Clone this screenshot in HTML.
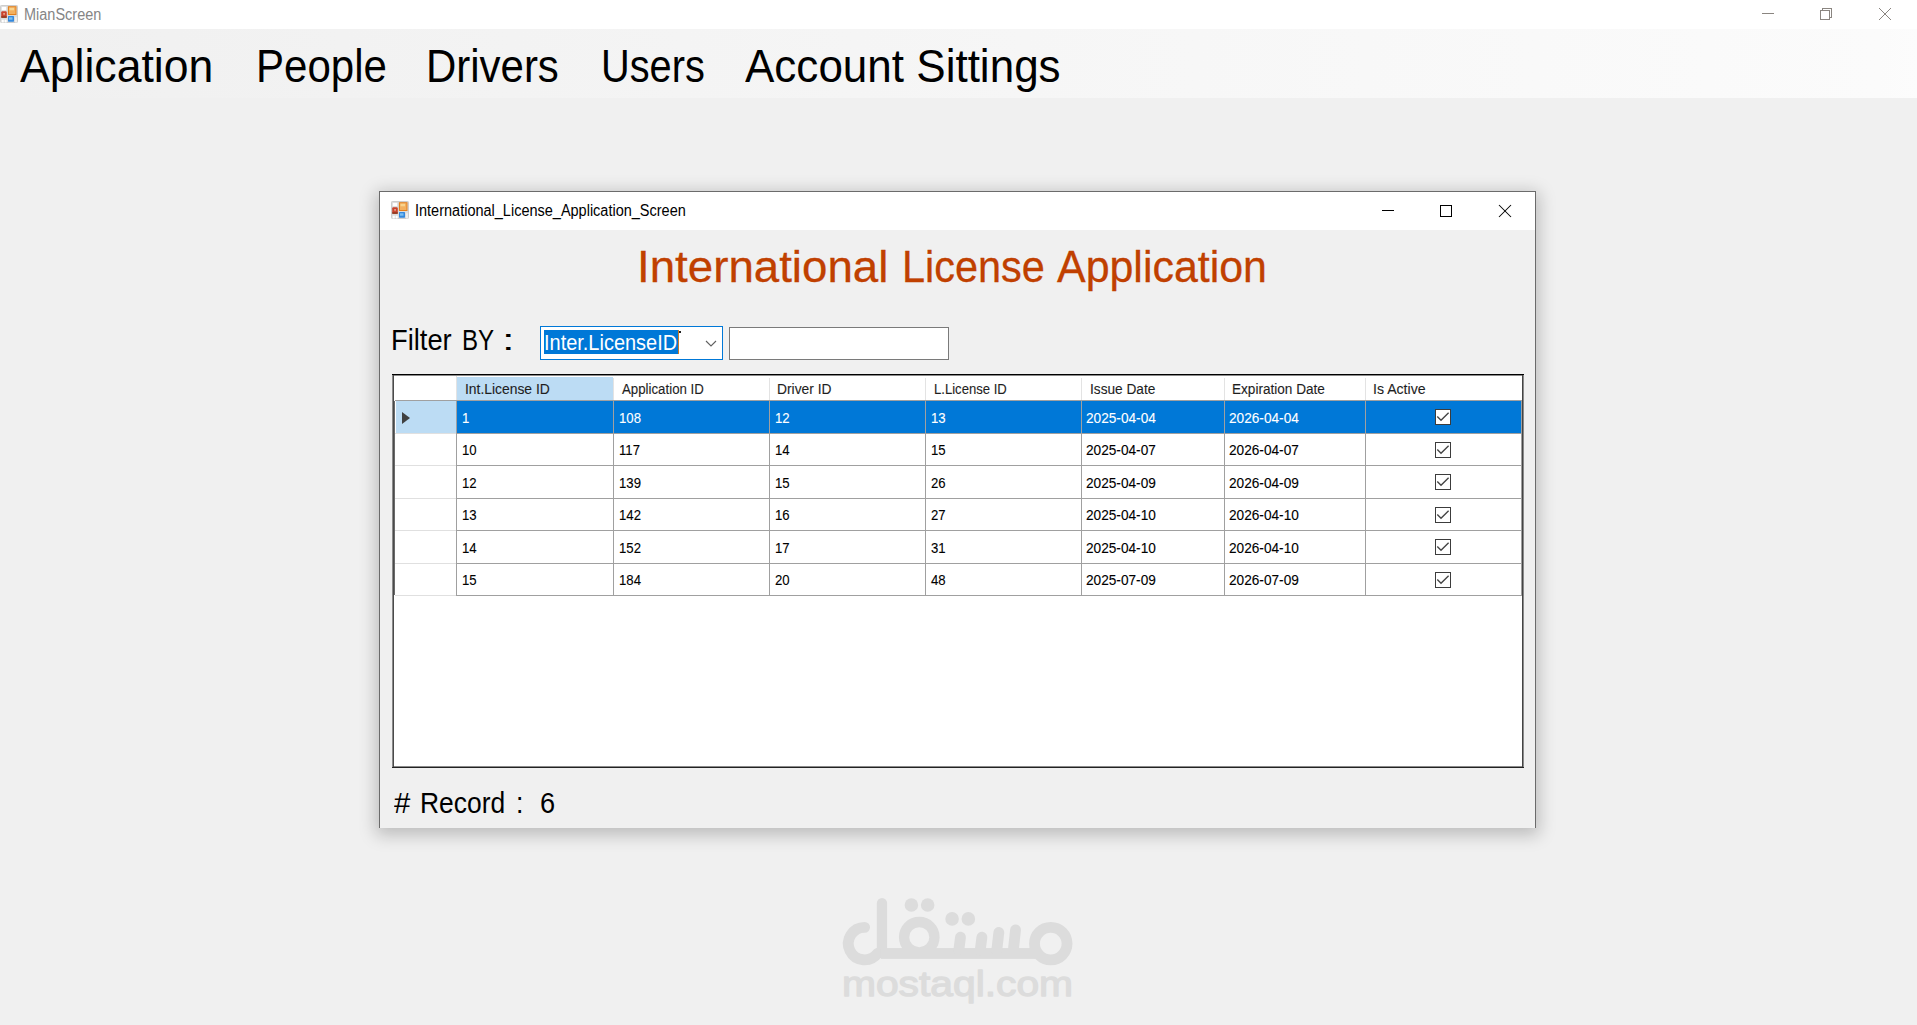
<!DOCTYPE html><html><head><meta charset="utf-8"><style>
*{margin:0;padding:0;box-sizing:border-box}
html,body{width:1917px;height:1025px;overflow:hidden;background:#f0f0f0;font-family:"Liberation Sans",sans-serif}
.a{position:absolute}
.t{position:absolute;white-space:nowrap;line-height:1;transform-origin:0 0}
</style></head><body><div class="a" style="left:0;top:0;width:1917px;height:29px;background:#fff"></div>
<div class="a" style="left:0;top:29px;width:1917px;height:69px;background:linear-gradient(to right,#f0f0f0,#fbfbfb 98%,#fcfcfc)"></div>
<svg class="a" style="left:0px;top:5px" width="18" height="18" viewBox="0 0 18 18">
<rect x="0.5" y="0.5" width="17" height="17" rx="0.8" fill="#dcdcdc" stroke="#cdcdcd"/>
<rect x="1.8" y="1.9" width="4.4" height="3.2" fill="#fff"/>
<rect x="1.2" y="6.2" width="5.6" height="6.6" rx="1.2" fill="#c9422c"/>
<path d="M3.2,8.2 L5,8.2 L4,10.5 Z" fill="#f2d9c0"/>
<rect x="1.2" y="11.3" width="5.6" height="1.5" fill="#8a3a20"/>
<rect x="7.9" y="1.2" width="8.6" height="8.8" fill="#e2801e"/>
<rect x="9" y="2.2" width="6.5" height="6.8" fill="#f3b05f"/>
<rect x="9.5" y="2.8" width="4.5" height="2.5" fill="#f8d48e"/>
<rect x="8" y="11" width="6" height="5.7" rx="0.6" fill="#3388dd"/>
<rect x="9" y="12.3" width="3.5" height="2.4" fill="#7cc0f2"/>
<rect x="1.75" y="14.7" width="2" height="2.8" fill="#fff"/><rect x="4.65" y="14.7" width="2" height="2.8" fill="#fff"/>
<rect x="15.2" y="12.3" width="1.5" height="5.2" fill="#f4f4f4"/>
</svg>
<svg class="a" style="left:1750px;top:0" width="167" height="29" viewBox="0 0 167 29">
<g stroke="#8a8580" stroke-width="1" fill="none" shape-rendering="crispEdges">
<line x1="12" y1="13.5" x2="24" y2="13.5"/>
<rect x="70.5" y="10.5" width="9" height="9"/>
<polyline points="72.5,10.5 72.5,8.5 81.5,8.5 81.5,17.5 79.5,17.5"/>
</g>
<g stroke="#8a8580" stroke-width="1" fill="none">
<line x1="129" y1="8" x2="141" y2="20"/><line x1="141" y1="8" x2="129" y2="20"/>
</g></svg>
<div class="a" style="left:379px;top:191px;width:1157px;height:637px;box-shadow:0 4px 16px 3px rgba(0,0,0,0.22);background:#f0f0f0;border:1px solid #6b6b6b;border-bottom:none"></div>
<div class="a" style="left:380px;top:192px;width:1155px;height:38px;background:#fff"></div>
<svg class="a" style="left:391px;top:201px" width="18" height="18" viewBox="0 0 18 18">
<rect x="0.5" y="0.5" width="17" height="17" rx="0.8" fill="#dcdcdc" stroke="#cdcdcd"/>
<rect x="1.8" y="1.9" width="4.4" height="3.2" fill="#fff"/>
<rect x="1.2" y="6.2" width="5.6" height="6.6" rx="1.2" fill="#c9422c"/>
<path d="M3.2,8.2 L5,8.2 L4,10.5 Z" fill="#f2d9c0"/>
<rect x="1.2" y="11.3" width="5.6" height="1.5" fill="#8a3a20"/>
<rect x="7.9" y="1.2" width="8.6" height="8.8" fill="#e2801e"/>
<rect x="9" y="2.2" width="6.5" height="6.8" fill="#f3b05f"/>
<rect x="9.5" y="2.8" width="4.5" height="2.5" fill="#f8d48e"/>
<rect x="8" y="11" width="6" height="5.7" rx="0.6" fill="#3388dd"/>
<rect x="9" y="12.3" width="3.5" height="2.4" fill="#7cc0f2"/>
<rect x="1.75" y="14.7" width="2" height="2.8" fill="#fff"/><rect x="4.65" y="14.7" width="2" height="2.8" fill="#fff"/>
<rect x="15.2" y="12.3" width="1.5" height="5.2" fill="#f4f4f4"/>
</svg>
<svg class="a" style="left:1360px;top:195px" width="175" height="35" viewBox="0 0 175 35">
<g stroke="#000" stroke-width="1" fill="none" shape-rendering="crispEdges">
<line x1="22" y1="15.5" x2="34" y2="15.5"/>
<rect x="80.5" y="10.5" width="11" height="11"/>
</g>
<g stroke="#000" stroke-width="1.05" fill="none">
<line x1="139" y1="10" x2="151" y2="22"/><line x1="151" y1="10" x2="139" y2="22"/>
</g></svg>
<div class="a" style="left:540px;top:326px;width:183px;height:34px;background:#fff;border:1px solid #0078d7"></div>
<div class="a" style="left:544px;top:330px;width:135px;height:24px;background:#0078d7"></div>
<svg class="a" style="left:700px;top:335px" width="20" height="16" viewBox="0 0 20 16"><polyline points="6,6 11,11 16,6" stroke="#606060" stroke-width="1.1" fill="none"/></svg>
<div class="a" style="left:678px;top:330px;width:1px;height:24px;background:#c87a2a"></div><div class="a" style="left:679px;top:331px;width:2px;height:2px;background:#222"></div>
<div class="a" style="left:729px;top:327px;width:220px;height:33px;background:#fff;border:1px solid #7a7a7a"></div>
<div class="a" style="left:392px;top:374px;width:1132px;height:394px;background:#fff"></div>
<div class="a" style="left:392px;top:374px;width:1132px;height:1px;background:#000"></div>
<div class="a" style="left:392px;top:375px;width:1132px;height:1px;background:#8a8a8a"></div>
<div class="a" style="left:392px;top:766px;width:1132px;height:1px;background:#8a8a8a"></div>
<div class="a" style="left:392px;top:767px;width:1132px;height:1px;background:#222"></div>
<div class="a" style="left:392px;top:375px;width:1px;height:392px;background:#8a8a8a"></div>
<div class="a" style="left:393px;top:375px;width:1px;height:392px;background:#4a4a4a"></div>
<div class="a" style="left:1522px;top:375px;width:1px;height:392px;background:#444"></div>
<div class="a" style="left:1523px;top:375px;width:1px;height:392px;background:#8a8a8a"></div>
<div class="a" style="left:394px;top:401px;width:1px;height:194px;background:#6a6a6a"></div>
<div class="a" style="left:457px;top:377px;width:156px;height:23px;background:#bcdcf4"></div>
<div class="a" style="left:396px;top:401px;width:60px;height:32px;background:#bcdcf4"></div>
<div class="a" style="left:457px;top:401px;width:1065px;height:32px;background:#0078d7"></div>
<div class="a" style="left:395px;top:400px;width:1127px;height:1px;background:#a0a0a0"></div>
<div class="a" style="left:613px;top:378px;width:1px;height:22px;background:#e3e3e3"></div>
<div class="a" style="left:769px;top:378px;width:1px;height:22px;background:#e3e3e3"></div>
<div class="a" style="left:925px;top:378px;width:1px;height:22px;background:#e3e3e3"></div>
<div class="a" style="left:1081px;top:378px;width:1px;height:22px;background:#e3e3e3"></div>
<div class="a" style="left:1224px;top:378px;width:1px;height:22px;background:#e3e3e3"></div>
<div class="a" style="left:1365px;top:378px;width:1px;height:22px;background:#e3e3e3"></div>
<div class="a" style="left:456px;top:376px;width:1px;height:24px;background:#e3e3e3"></div>
<div class="a" style="left:457px;top:433px;width:1065px;height:1px;background:#a0a0a0"></div>
<div class="a" style="left:395px;top:433px;width:61px;height:1px;background:#e0e0e0"></div>
<div class="a" style="left:457px;top:465px;width:1065px;height:1px;background:#a0a0a0"></div>
<div class="a" style="left:395px;top:465px;width:61px;height:1px;background:#e0e0e0"></div>
<div class="a" style="left:457px;top:498px;width:1065px;height:1px;background:#a0a0a0"></div>
<div class="a" style="left:395px;top:498px;width:61px;height:1px;background:#e0e0e0"></div>
<div class="a" style="left:457px;top:530px;width:1065px;height:1px;background:#a0a0a0"></div>
<div class="a" style="left:395px;top:530px;width:61px;height:1px;background:#e0e0e0"></div>
<div class="a" style="left:457px;top:563px;width:1065px;height:1px;background:#a0a0a0"></div>
<div class="a" style="left:395px;top:563px;width:61px;height:1px;background:#e0e0e0"></div>
<div class="a" style="left:457px;top:595px;width:1065px;height:1px;background:#a0a0a0"></div>
<div class="a" style="left:395px;top:595px;width:61px;height:1px;background:#e0e0e0"></div>
<div class="a" style="left:456px;top:401px;width:1px;height:195px;background:#a0a0a0"></div>
<div class="a" style="left:613px;top:401px;width:1px;height:195px;background:#a0a0a0"></div>
<div class="a" style="left:769px;top:401px;width:1px;height:195px;background:#a0a0a0"></div>
<div class="a" style="left:925px;top:401px;width:1px;height:195px;background:#a0a0a0"></div>
<div class="a" style="left:1081px;top:401px;width:1px;height:195px;background:#a0a0a0"></div>
<div class="a" style="left:1224px;top:401px;width:1px;height:195px;background:#a0a0a0"></div>
<div class="a" style="left:1365px;top:401px;width:1px;height:195px;background:#a0a0a0"></div>
<div class="a" style="left:1521px;top:401px;width:1px;height:195px;background:#a0a0a0"></div>
<svg class="a" style="left:400px;top:410px" width="12" height="16" viewBox="0 0 12 16"><polygon points="2,2 10,8 2,14" fill="#404040"/></svg>
<svg class="a" style="left:1435px;top:409px" width="16" height="16" viewBox="0 0 16 16">
<rect x="0.5" y="0.5" width="15" height="15" fill="#fff" stroke="#3c3c3c"/>
<polyline points="2.3,7.6 6,11.2 13.6,3.8" stroke="#444" stroke-width="1.35" fill="none"/></svg>
<svg class="a" style="left:1435px;top:442px" width="16" height="16" viewBox="0 0 16 16">
<rect x="0.5" y="0.5" width="15" height="15" fill="#fff" stroke="#3c3c3c"/>
<polyline points="2.3,7.6 6,11.2 13.6,3.8" stroke="#444" stroke-width="1.35" fill="none"/></svg>
<svg class="a" style="left:1435px;top:474px" width="16" height="16" viewBox="0 0 16 16">
<rect x="0.5" y="0.5" width="15" height="15" fill="#fff" stroke="#3c3c3c"/>
<polyline points="2.3,7.6 6,11.2 13.6,3.8" stroke="#444" stroke-width="1.35" fill="none"/></svg>
<svg class="a" style="left:1435px;top:507px" width="16" height="16" viewBox="0 0 16 16">
<rect x="0.5" y="0.5" width="15" height="15" fill="#fff" stroke="#3c3c3c"/>
<polyline points="2.3,7.6 6,11.2 13.6,3.8" stroke="#444" stroke-width="1.35" fill="none"/></svg>
<svg class="a" style="left:1435px;top:539px" width="16" height="16" viewBox="0 0 16 16">
<rect x="0.5" y="0.5" width="15" height="15" fill="#fff" stroke="#3c3c3c"/>
<polyline points="2.3,7.6 6,11.2 13.6,3.8" stroke="#444" stroke-width="1.35" fill="none"/></svg>
<svg class="a" style="left:1435px;top:572px" width="16" height="16" viewBox="0 0 16 16">
<rect x="0.5" y="0.5" width="15" height="15" fill="#fff" stroke="#3c3c3c"/>
<polyline points="2.3,7.6 6,11.2 13.6,3.8" stroke="#444" stroke-width="1.35" fill="none"/></svg>
<svg class="a" style="left:830px;top:885px" width="260" height="125" viewBox="0 0 1917 922">
<g fill="none" stroke="#dcdcdc">
<path d="M255,312 A120,120 0 1 0 351,504" stroke-width="80" stroke-linecap="round"/>
<circle cx="1628" cy="432" r="120" stroke-width="80"/>
<circle cx="658" cy="385" r="112" stroke-width="76"/>
</g>
<g fill="#dcdcdc">
<rect x="345" y="95" width="76" height="440" rx="38"/>
<rect x="375" y="465" width="1140" height="80"/>
<circle cx="600" cy="148" r="50"/><circle cx="720" cy="148" r="50"/>
<circle cx="900" cy="250" r="50"/><circle cx="1020" cy="250" r="50"/>
</g>
<g stroke="#dcdcdc" stroke-width="80" stroke-linecap="round">
<line x1="962" y1="385" x2="950" y2="480"/>
<line x1="1120" y1="385" x2="1108" y2="480"/>
<line x1="1245" y1="350" x2="1230" y2="480"/>
<line x1="1368" y1="332" x2="1352" y2="480"/>
</g>
</svg>
<svg class="a" style="left:830px;top:960px" width="260" height="50" viewBox="830 960 260 50"><text id="wm" x="842" y="995.8" font-family="Liberation Sans" font-size="35.6" fill="#dcdcdc" stroke="#dcdcdc" stroke-width="1.3" stroke-linejoin="round" textLength="231" lengthAdjust="spacingAndGlyphs">mostaql.com</text></svg>
<div id="tMain" class="t" style="left:24.00px;top:7px;font-size:15.8px;color:#858585;transform:scaleX(0.9172);">MianScreen</div>
<div id="m1" class="t" style="left:20.18px;top:43px;font-size:46.5px;color:#000;transform:scaleX(0.9590);">Aplication</div>
<div id="m2" class="t" style="left:255.67px;top:43px;font-size:46.5px;color:#000;transform:scaleX(0.9044);">People</div>
<div id="m3" class="t" style="left:426.15px;top:43px;font-size:46.5px;color:#000;transform:scaleX(0.9021);">Drivers</div>
<div id="m4" class="t" style="left:600.69px;top:43px;font-size:46.5px;color:#000;transform:scaleX(0.8548);">Users</div>
<div id="m5" class="t" style="left:744.86px;top:43px;font-size:46.5px;color:#000;transform:scaleX(0.9466);">Account Sittings</div>
<div id="tDlg" class="t" style="left:415.08px;top:203px;font-size:15.8px;color:#000;transform:scaleX(0.9177);">International_License_Application_Screen</div>
<div id="tHead1" class="t" style="left:637.14px;top:244px;font-size:45px;color:#c04000;transform:scaleX(1.0149);-webkit-text-stroke:0.3px #c04000;">International</div>
<div id="tHead2" class="t" style="left:901.99px;top:244px;font-size:45px;color:#c04000;transform:scaleX(0.9206);-webkit-text-stroke:0.3px #c04000;">License</div>
<div id="tHead3" class="t" style="left:1056.83px;top:244px;font-size:45px;color:#c04000;transform:scaleX(0.9538);-webkit-text-stroke:0.3px #c04000;">Application</div>
<div id="tFilter1" class="t" style="left:391.33px;top:326px;font-size:29px;color:#000;transform:scaleX(0.9420);">Filter</div>
<div id="tFilter2" class="t" style="left:461.64px;top:326px;font-size:29px;color:#000;transform:scaleX(0.8298);">BY</div>
<div id="tFilter3" class="t" style="left:501.59px;top:326px;font-size:29px;color:#000;transform:scaleX(1.5625);">:</div>
<div id="tCombo" class="t" style="left:543.70px;top:332px;font-size:22px;color:#fff;transform:scaleX(0.9070);">Inter.LicenseID</div>
<div id="tRec1" class="t" style="left:394.38px;top:789px;font-size:29px;color:#000;transform:scaleX(1.0135);">#</div>
<div id="tRec2" class="t" style="left:420.18px;top:789px;font-size:29px;color:#000;transform:scaleX(0.9111);">Record</div>
<div id="tRec3" class="t" style="left:515.95px;top:789px;font-size:29px;color:#000;transform:scaleX(0.9189);">:</div>
<div id="tRec4" class="t" style="left:539.86px;top:789px;font-size:29px;color:#000;transform:scaleX(0.9371);">6</div>
<div id="h0" class="t" style="left:464.91px;top:382px;font-size:14px;color:#1e1e1e;transform:scaleX(0.9905);-webkit-text-stroke:0.1px #1e1e1e;">Int.License ID</div>
<div id="h1" class="t" style="left:622.47px;top:382px;font-size:14px;color:#1e1e1e;transform:scaleX(0.9473);-webkit-text-stroke:0.1px #1e1e1e;">Application ID</div>
<div id="h2" class="t" style="left:776.90px;top:382px;font-size:14px;color:#1e1e1e;transform:scaleX(0.9860);-webkit-text-stroke:0.1px #1e1e1e;">Driver ID</div>
<div id="h3" class="t" style="left:933.84px;top:382px;font-size:14px;color:#1e1e1e;transform:scaleX(0.9351);-webkit-text-stroke:0.1px #1e1e1e;">L.License ID</div>
<div id="h4" class="t" style="left:1089.58px;top:382px;font-size:14px;color:#1e1e1e;transform:scaleX(0.9768);-webkit-text-stroke:0.1px #1e1e1e;">Issue Date</div>
<div id="h5" class="t" style="left:1231.61px;top:382px;font-size:14px;color:#1e1e1e;transform:scaleX(0.9706);-webkit-text-stroke:0.1px #1e1e1e;">Expiration Date</div>
<div id="h6" class="t" style="left:1373.19px;top:382px;font-size:14px;color:#1e1e1e;transform:scaleX(1.0085);-webkit-text-stroke:0.1px #1e1e1e;">Is Active</div>
<div id="c00" class="t" style="left:462.00px;top:411px;font-size:14px;color:#fff;transform:scaleX(0.9400);-webkit-text-stroke:0.1px #fff;">1</div>
<div id="c01" class="t" style="left:619.00px;top:411px;font-size:14px;color:#fff;transform:scaleX(0.9400);-webkit-text-stroke:0.1px #fff;">108</div>
<div id="c02" class="t" style="left:775.00px;top:411px;font-size:14px;color:#fff;transform:scaleX(0.9400);-webkit-text-stroke:0.1px #fff;">12</div>
<div id="c03" class="t" style="left:931.00px;top:411px;font-size:14px;color:#fff;transform:scaleX(0.9400);-webkit-text-stroke:0.1px #fff;">13</div>
<div id="c04" class="t" style="left:1086.30px;top:411px;font-size:14px;color:#fff;transform:scaleX(0.9750);-webkit-text-stroke:0.1px #fff;">2025-04-04</div>
<div id="c05" class="t" style="left:1229.30px;top:411px;font-size:14px;color:#fff;transform:scaleX(0.9750);-webkit-text-stroke:0.1px #fff;">2026-04-04</div>
<div id="c10" class="t" style="left:462.00px;top:443px;font-size:14px;color:#000;transform:scaleX(0.9400);-webkit-text-stroke:0.1px #000;">10</div>
<div id="c11" class="t" style="left:619.00px;top:443px;font-size:14px;color:#000;transform:scaleX(0.9400);-webkit-text-stroke:0.1px #000;">117</div>
<div id="c12" class="t" style="left:775.00px;top:443px;font-size:14px;color:#000;transform:scaleX(0.9400);-webkit-text-stroke:0.1px #000;">14</div>
<div id="c13" class="t" style="left:931.00px;top:443px;font-size:14px;color:#000;transform:scaleX(0.9400);-webkit-text-stroke:0.1px #000;">15</div>
<div id="c14" class="t" style="left:1086.30px;top:443px;font-size:14px;color:#000;transform:scaleX(0.9750);-webkit-text-stroke:0.1px #000;">2025-04-07</div>
<div id="c15" class="t" style="left:1229.30px;top:443px;font-size:14px;color:#000;transform:scaleX(0.9750);-webkit-text-stroke:0.1px #000;">2026-04-07</div>
<div id="c20" class="t" style="left:462.00px;top:476px;font-size:14px;color:#000;transform:scaleX(0.9400);-webkit-text-stroke:0.1px #000;">12</div>
<div id="c21" class="t" style="left:619.00px;top:476px;font-size:14px;color:#000;transform:scaleX(0.9400);-webkit-text-stroke:0.1px #000;">139</div>
<div id="c22" class="t" style="left:775.00px;top:476px;font-size:14px;color:#000;transform:scaleX(0.9400);-webkit-text-stroke:0.1px #000;">15</div>
<div id="c23" class="t" style="left:931.00px;top:476px;font-size:14px;color:#000;transform:scaleX(0.9400);-webkit-text-stroke:0.1px #000;">26</div>
<div id="c24" class="t" style="left:1086.30px;top:476px;font-size:14px;color:#000;transform:scaleX(0.9750);-webkit-text-stroke:0.1px #000;">2025-04-09</div>
<div id="c25" class="t" style="left:1229.30px;top:476px;font-size:14px;color:#000;transform:scaleX(0.9750);-webkit-text-stroke:0.1px #000;">2026-04-09</div>
<div id="c30" class="t" style="left:462.00px;top:508px;font-size:14px;color:#000;transform:scaleX(0.9400);-webkit-text-stroke:0.1px #000;">13</div>
<div id="c31" class="t" style="left:619.00px;top:508px;font-size:14px;color:#000;transform:scaleX(0.9400);-webkit-text-stroke:0.1px #000;">142</div>
<div id="c32" class="t" style="left:775.00px;top:508px;font-size:14px;color:#000;transform:scaleX(0.9400);-webkit-text-stroke:0.1px #000;">16</div>
<div id="c33" class="t" style="left:931.00px;top:508px;font-size:14px;color:#000;transform:scaleX(0.9400);-webkit-text-stroke:0.1px #000;">27</div>
<div id="c34" class="t" style="left:1086.30px;top:508px;font-size:14px;color:#000;transform:scaleX(0.9750);-webkit-text-stroke:0.1px #000;">2025-04-10</div>
<div id="c35" class="t" style="left:1229.30px;top:508px;font-size:14px;color:#000;transform:scaleX(0.9750);-webkit-text-stroke:0.1px #000;">2026-04-10</div>
<div id="c40" class="t" style="left:462.00px;top:541px;font-size:14px;color:#000;transform:scaleX(0.9400);-webkit-text-stroke:0.1px #000;">14</div>
<div id="c41" class="t" style="left:619.00px;top:541px;font-size:14px;color:#000;transform:scaleX(0.9400);-webkit-text-stroke:0.1px #000;">152</div>
<div id="c42" class="t" style="left:775.00px;top:541px;font-size:14px;color:#000;transform:scaleX(0.9400);-webkit-text-stroke:0.1px #000;">17</div>
<div id="c43" class="t" style="left:931.00px;top:541px;font-size:14px;color:#000;transform:scaleX(0.9400);-webkit-text-stroke:0.1px #000;">31</div>
<div id="c44" class="t" style="left:1086.30px;top:541px;font-size:14px;color:#000;transform:scaleX(0.9750);-webkit-text-stroke:0.1px #000;">2025-04-10</div>
<div id="c45" class="t" style="left:1229.30px;top:541px;font-size:14px;color:#000;transform:scaleX(0.9750);-webkit-text-stroke:0.1px #000;">2026-04-10</div>
<div id="c50" class="t" style="left:462.00px;top:573px;font-size:14px;color:#000;transform:scaleX(0.9400);-webkit-text-stroke:0.1px #000;">15</div>
<div id="c51" class="t" style="left:619.00px;top:573px;font-size:14px;color:#000;transform:scaleX(0.9400);-webkit-text-stroke:0.1px #000;">184</div>
<div id="c52" class="t" style="left:775.00px;top:573px;font-size:14px;color:#000;transform:scaleX(0.9400);-webkit-text-stroke:0.1px #000;">20</div>
<div id="c53" class="t" style="left:931.00px;top:573px;font-size:14px;color:#000;transform:scaleX(0.9400);-webkit-text-stroke:0.1px #000;">48</div>
<div id="c54" class="t" style="left:1086.30px;top:573px;font-size:14px;color:#000;transform:scaleX(0.9750);-webkit-text-stroke:0.1px #000;">2025-07-09</div>
<div id="c55" class="t" style="left:1229.30px;top:573px;font-size:14px;color:#000;transform:scaleX(0.9750);-webkit-text-stroke:0.1px #000;">2026-07-09</div></body></html>
